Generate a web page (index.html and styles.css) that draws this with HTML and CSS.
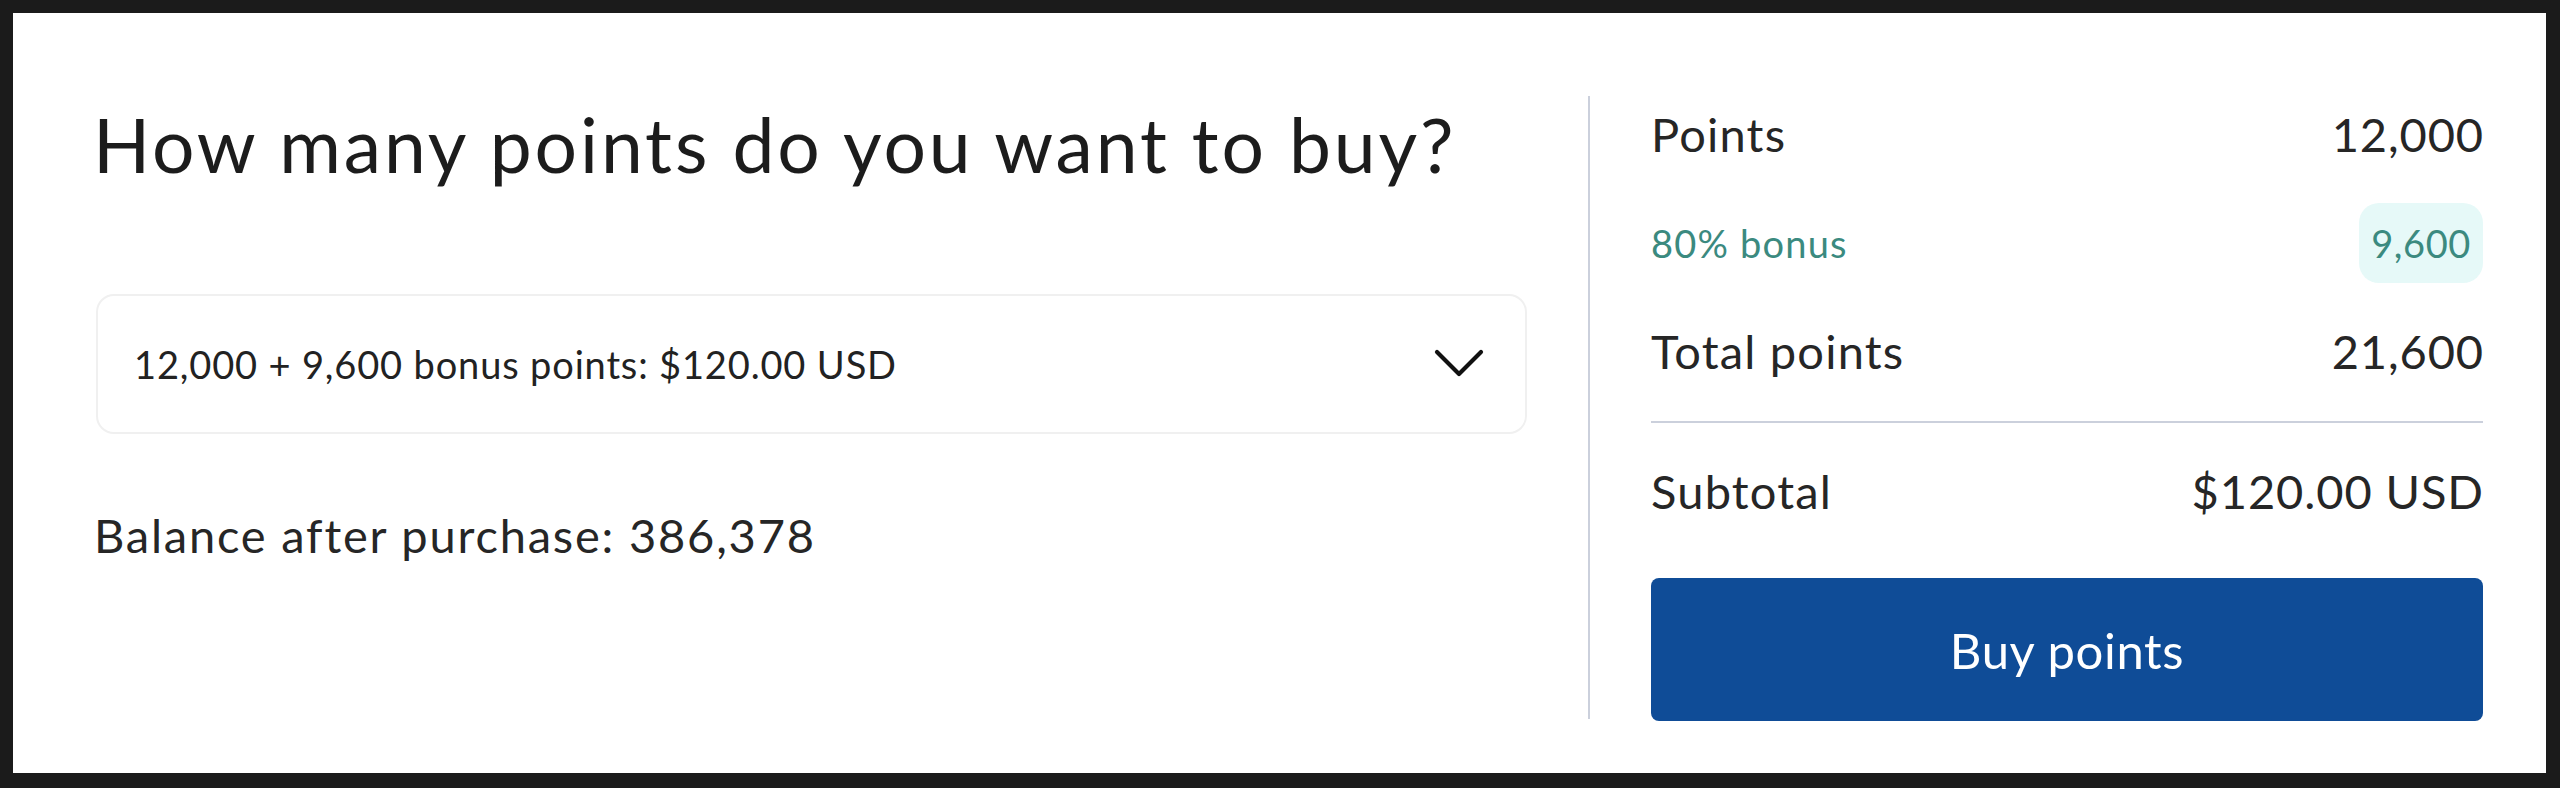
FILE: index.html
```html
<!DOCTYPE html>
<html lang="en">
<head>
<meta charset="utf-8">
<title>Buy points</title>
<link rel="stylesheet" href="styles.css">
</head>
<body>
<main class="card">
  <section class="left">
    <h1 class="title">How many points do you want to buy?</h1>
    <div class="select">
      <span class="select-text">12,000 + 9,600 bonus points: $120.00 USD</span>
      <svg class="chevron" width="50" height="30" viewBox="0 0 50 30" aria-hidden="true">
        <path d="M3 3 L25 25 L47 3" fill="none" stroke="#111" stroke-width="4.2" stroke-linecap="round" stroke-linejoin="round"/>
      </svg>
    </div>
    <p class="balance">Balance after purchase: 386,378</p>
  </section>
  <div class="divider"></div>
  <section class="right">
    <div class="row"><span>Points</span><span class="num">12,000</span></div>
    <div class="row bonus"><span>80% bonus</span><span class="badge">9,600</span></div>
    <div class="row"><span>Total points</span><span class="num">21,600</span></div>
    <hr class="rule">
    <div class="row"><span>Subtotal</span><span class="num">$120.00 USD</span></div>
    <button class="buy">Buy points</button>
  </section>
</main>
</body>
</html>
```
FILE: styles.css
```css
html, body {
  margin: 0;
  padding: 0;
}
body {
  background: #1b1b1b;
  padding: 13px 14px 15px 13px;
  font-family: "Lato", "Liberation Sans", sans-serif;
  color: #222;
  height: 788px;
  box-sizing: border-box;
}
.card {
  background: #fff;
  height: 760px;
  box-sizing: border-box;
  padding: 83px 63px 0 83px;
  display: flex;
  align-items: flex-start;
}
.left {
  width: 1431px;
  flex: none;
}
.title {
  margin: 0 0 0 -3px;
  font-weight: 400;
  font-size: 75px;
  line-height: 96px;
  color: #1c1c1c;
  letter-spacing: 2.9px;
}
.select {
  margin-top: 102px;
  height: 140px;
  box-sizing: border-box;
  border: 2px solid #f0f0f0;
  border-radius: 18px;
  display: flex;
  align-items: center;
  justify-content: space-between;
  padding: 0 41px 0 36px;
}
.select-text {
  font-size: 38px;
  letter-spacing: 0.85px;
  color: #222;
}
.chevron {
  display: block;
}
.balance {
  margin: 63px 0 0 -2px;
  font-size: 47px;
  line-height: 76px;
  letter-spacing: 1.8px;
  color: #262626;
}
.divider {
  flex: none;
  width: 2px;
  height: 623px;
  background: #cbd0dc;
  margin: 0 61px;
}
.right {
  flex: 1;
  display: flex;
  flex-direction: column;
}
.row {
  display: flex;
  justify-content: space-between;
  align-items: center;
  height: 76px;
  font-size: 47px;
  letter-spacing: 1.2px;
  color: #262626;
}
.row .num {
  letter-spacing: 0.9px;
  margin-right: -1px;
}
.row.bonus {
  height: 80px;
  margin: 31px 0 30px;
  font-size: 38px;
  color: #3b8a7f;
}
.badge {
  background: #e6f9f8;
  border-radius: 20px;
  height: 80px;
  display: flex;
  align-items: center;
  padding: 0 12px;
  letter-spacing: 0.6px;
}
.rule {
  border: none;
  height: 2px;
  background: #cbd0dc;
  margin: 32px 0 30px;
}
.buy {
  margin-top: 49px;
  height: 143px;
  border: none;
  border-radius: 8px;
  background: #0f4c97;
  color: #fff;
  font-family: "Lato", "Liberation Sans", sans-serif;
  font-size: 49px;
  letter-spacing: 0.65px;
  cursor: pointer;
}
```
